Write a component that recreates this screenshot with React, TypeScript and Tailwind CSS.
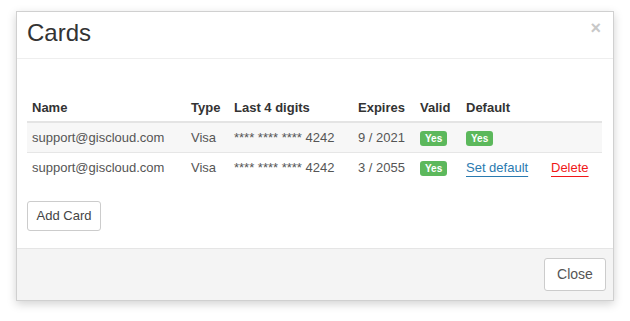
import React from "react";

const cards = [
  { name: "support@giscloud.com", type: "Visa", last4: "4242", expires: "9 / 2021", valid: true, isDefault: true },
  { name: "support@giscloud.com", type: "Visa", last4: "4242", expires: "3 / 2055", valid: true, isDefault: false },
];

function Badge() {
  return (
    <span className="inline-block rounded-[3px] bg-[#5cb85c] px-[5px] py-[2px] text-[10px] font-bold leading-[11px] text-white">
      Yes
    </span>
  );
}

export default function App() {
  return (
    <div className="h-[321px] w-[630px] bg-white pl-[16px] pt-[11px] font-['Liberation_Sans',Arial,sans-serif] text-[13px] text-[#555]">
      <div className="w-[598px] border border-[#d0d0d0] bg-white shadow-[0_3px_9px_rgba(0,0,0,0.18)]">
        {/* Header */}
        <div className="flex h-[47px] items-center justify-between border-b border-[#eeeeee] pl-[10px] pr-[12px]">
          <h4 className="-mt-[4px] text-[24px] leading-none text-[#333]">Cards</h4>
          <span className="-mt-[14px] text-[18px] font-bold leading-none text-[#c8c8c8]">×</span>
        </div>

        {/* Body */}
        <div className="px-[10px] pb-[17px] pt-[35px]">
          <table className="w-[575px] table-fixed border-collapse text-left">
            <colgroup>
              <col className="w-[159px]" />
              <col className="w-[43px]" />
              <col className="w-[124px]" />
              <col className="w-[62px]" />
              <col className="w-[46px]" />
              <col className="w-[85px]" />
              <col className="w-[56px]" />
            </colgroup>
            <thead>
              <tr className="h-[28px] border-b-2 border-[#e4e4e4] text-[#333]">
                <th className="px-[5px] font-bold">Name</th>
                <th className="px-[5px] font-bold">Type</th>
                <th className="px-[5px] font-bold">Last 4 digits</th>
                <th className="px-[5px] font-bold">Expires</th>
                <th className="px-[5px] font-bold">Valid</th>
                <th className="px-[5px] font-bold">Default</th>
                <th className="px-[5px]"></th>
              </tr>
            </thead>
            <tbody>
              {cards.map((card, index) => (
                <tr
                  key={index}
                  className={`h-[30px] border-b border-[#e6e6e6] last:border-b-0 ${index % 2 === 0 ? "bg-[#f7f7f7]" : "bg-white"}`}
                >
                  <td className="px-[5px]">{card.name}</td>
                  <td className="px-[5px]">{card.type}</td>
                  <td className="whitespace-nowrap px-[5px]">**** **** **** {card.last4}</td>
                  <td className="px-[5px]">{card.expires}</td>
                  <td className="px-[5px]">{card.valid && <Badge />}</td>
                  <td className="px-[5px]">
                    {card.isDefault ? (
                      <Badge />
                    ) : (
                      <a href="#" className="text-[#2a7ab0] underline decoration-[#2a7ab0] underline-offset-[4px]">
                        Set default
                      </a>
                    )}
                  </td>
                  <td className="px-[5px]">
                    {!card.isDefault && (
                      <a href="#" className="text-[#f01818] underline decoration-[#f01818] underline-offset-[4px]">
                        Delete
                      </a>
                    )}
                  </td>
                </tr>
              ))}
            </tbody>
          </table>

          <button className="mt-[19px] h-[30px] w-[74px] rounded-[3px] border border-[#cccccc] bg-white text-[13px] text-[#444]">
            Add Card
          </button>
        </div>

        {/* Footer */}
        <div className="flex h-[52px] items-center justify-end border-t border-[#e5e5e5] bg-[#f4f4f4] pr-[7px]">
          <button className="h-[33px] w-[62px] rounded-[3px] border border-[#cccccc] bg-white text-[14px] text-[#555]">
            Close
          </button>
        </div>
      </div>
    </div>
  );
}
